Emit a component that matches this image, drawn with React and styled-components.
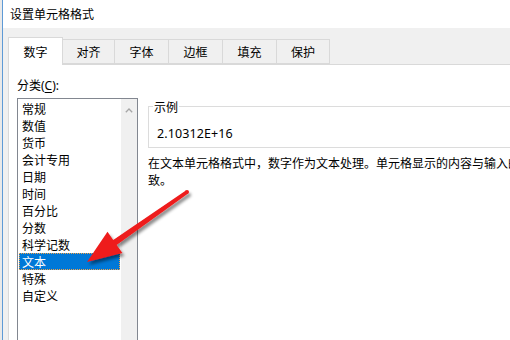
import React from "react";
import styled, { createGlobalStyle } from "styled-components";

const Global = createGlobalStyle`
  html, body { margin: 0; padding: 0; background: #f0f0f0; }
  body { font-family: "Noto Sans", "Noto Sans CJK SC", sans-serif; }
`;

const Screen = styled.div`
  position: relative;
  width: 510px;
  height: 340px;
  overflow: hidden;
  display: flex;
  background: #e9e9e9;
`;

const Dialog = styled.div`
  margin-left: 2px;
  width: 700px;
  flex: none;
  display: flex;
  flex-direction: column;
  border-left: 1px solid #5e9ad6;
  background: #f0f0f0;
  color: #000;
  font-size: 12px;
`;

const TitleBar = styled.div`
  height: 28px;
  flex: none;
  background: #fff;
  display: flex;
  align-items: center;
  padding-left: 7px;
  padding-bottom: 2px;
  box-sizing: border-box;
  font-family: "Noto Sans CJK SC", sans-serif;
  font-size: 12px;
`;

const Body = styled.div`
  flex: 1;
  display: flex;
  flex-direction: column;
  padding: 9px 0 0 5px;
`;

const TabStrip = styled.div`
  display: flex;
  align-items: flex-end;
  height: 27px;
  flex: none;
  position: relative;
  z-index: 1;
`;

const Tab = styled.div`
  box-sizing: border-box;
  width: ${(p) => p.$w}px;
  height: ${(p) => (p.$active ? 28 : 25)}px;
  margin-bottom: ${(p) => (p.$active ? -1 : 0)}px;
  margin-left: ${(p) => (p.$first ? 0 : -1)}px;
  background: ${(p) => (p.$active ? "#fff" : "#f0f0f0")};
  border: 1px solid #d9d9d9;
  border-bottom: ${(p) => (p.$active ? "none" : "1px solid #d9d9d9")};
  display: flex;
  align-items: center;
  justify-content: center;
  padding-top: ${(p) => (p.$active ? 1 : 0)}px;
  font-family: "Noto Sans CJK SC", sans-serif;
  font-size: 12px;
  line-height: 16px;
`;

const Panel = styled.div`
  flex: 1;
  background: #fff;
  border-top: 1px solid #d9d9d9;
  border-left: 1px solid #d9d9d9;
  padding: 12px 0 0 8px;
  display: grid;
  grid-template-columns: 121px 1fr;
  grid-template-rows: 17px 1fr;
  column-gap: 10px;
  row-gap: 4px;
`;

const CatLabel = styled.div`
  grid-column: 1 / span 2;
  line-height: 17px;
  font-size: 12px;
  white-space: nowrap;
  u { text-decoration: underline; text-underline-offset: 2px; }
`;

const ListBox = styled.div`
  box-sizing: border-box;
  border: 1px solid #828790;
  border-bottom: none;
  display: flex;
  min-height: 250px;
`;

const Items = styled.div`
  flex: 1;
  padding: 1px 1px 0 1px;
  display: flex;
  flex-direction: column;
`;

const Item = styled.div`
  box-sizing: border-box;
  height: 17px;
  line-height: 15px;
  padding-left: 2px;
  font-size: 12px;
  font-family: "Noto Sans CJK SC", sans-serif;
  white-space: nowrap;
  border: 1px ${(p) => (p.$selected ? "dotted #f0a24a" : "solid transparent")};
  background: ${(p) => (p.$selected ? "#0078d7" : "transparent")};
  color: ${(p) => (p.$selected ? "#fff" : "#000")};
`;

const ScrollBar = styled.div`
  width: 16px;
  flex: none;
  background: #f0f0f0;
  display: flex;
  justify-content: center;
  padding-top: 9px;
  box-sizing: border-box;
`;

const RightCol = styled.div`
  display: flex;
  flex-direction: column;
  min-width: 0;
`;

const Group = styled.fieldset`
  margin: 0;
  padding: 10px 0 5px 4px;
  border: 1px solid #dcdcdc;
  min-width: 0;
`;

const Legend = styled.legend`
  padding: 0 1px;
  font-size: 12px;
  line-height: 17px;
  font-family: "Noto Sans CJK SC", sans-serif;
`;

const Value = styled.div`
  margin-left: 4px;
  line-height: 17px;
  font-size: 12.5px;
  font-family: "Noto Sans", sans-serif;
  letter-spacing: 0.1px;
`;

const Desc = styled.div`
  margin-top: 6px;
  line-height: 17px;
  font-size: 12px;
  font-family: "Noto Sans CJK SC", sans-serif;
  white-space: nowrap;
`;

const Overlay = styled.svg`
  position: absolute;
  left: 0;
  top: 0;
  width: 510px;
  height: 340px;
  pointer-events: none;
`;

const tabs = [
  { label: "数字", w: 55 },
  { label: "对齐", w: 53 },
  { label: "字体", w: 55 },
  { label: "边框", w: 55 },
  { label: "填充", w: 55 },
  { label: "保护", w: 54 },
];

const items = [
  "常规",
  "数值",
  "货币",
  "会计专用",
  "日期",
  "时间",
  "百分比",
  "分数",
  "科学记数",
  "文本",
  "特殊",
  "自定义",
];

export default function App() {
  return (
    <>
      <Global />
      <Screen>
        <Dialog>
          <TitleBar>设置单元格格式</TitleBar>
          <Body>
            <TabStrip>
              {tabs.map((t, i) => (
                <Tab key={t.label} $w={t.w} $active={i === 0} $first={i === 0}>
                  {t.label}
                </Tab>
              ))}
            </TabStrip>
            <Panel>
              <CatLabel>
                分类(<u>C</u>):
              </CatLabel>
              <ListBox>
                <Items>
                  {items.map((it) => (
                    <Item key={it} $selected={it === "文本"}>
                      {it}
                    </Item>
                  ))}
                </Items>
                <ScrollBar>
                  <svg width="8" height="5" viewBox="0 0 8 5">
                    <polyline
                      points="0.8,4.2 4,1 7.2,4.2"
                      fill="none"
                      stroke="#a6a6a6"
                      strokeWidth="1.3"
                    />
                  </svg>
                </ScrollBar>
              </ListBox>
              <RightCol>
                <Group>
                  <Legend>示例</Legend>
                  <Value>2.10312E+16</Value>
                </Group>
                <Desc>
                  在文本单元格格式中，数字作为文本处理。单元格显示的内容与输入的内容完全一
                  <br />
                  致。
                </Desc>
              </RightCol>
            </Panel>
          </Body>
        </Dialog>
        <Overlay viewBox="0 0 510 340">
          <defs>
            <filter id="sh" x="-20%" y="-20%" width="140%" height="140%">
              <feDropShadow dx="2" dy="3" stdDeviation="1.8" floodColor="#000" floodOpacity="0.45" />
            </filter>
          </defs>
          <g filter="url(#sh)" fill="#ee1b1b">
            <polygon points="185.9,190.4 113.2,239.9 107.5,231.8 87,262 122.4,253 116.6,244.9 188.1,193.6" />
            <circle cx="187" cy="192" r="2" />
          </g>
        </Overlay>
      </Screen>
    </>
  );
}
